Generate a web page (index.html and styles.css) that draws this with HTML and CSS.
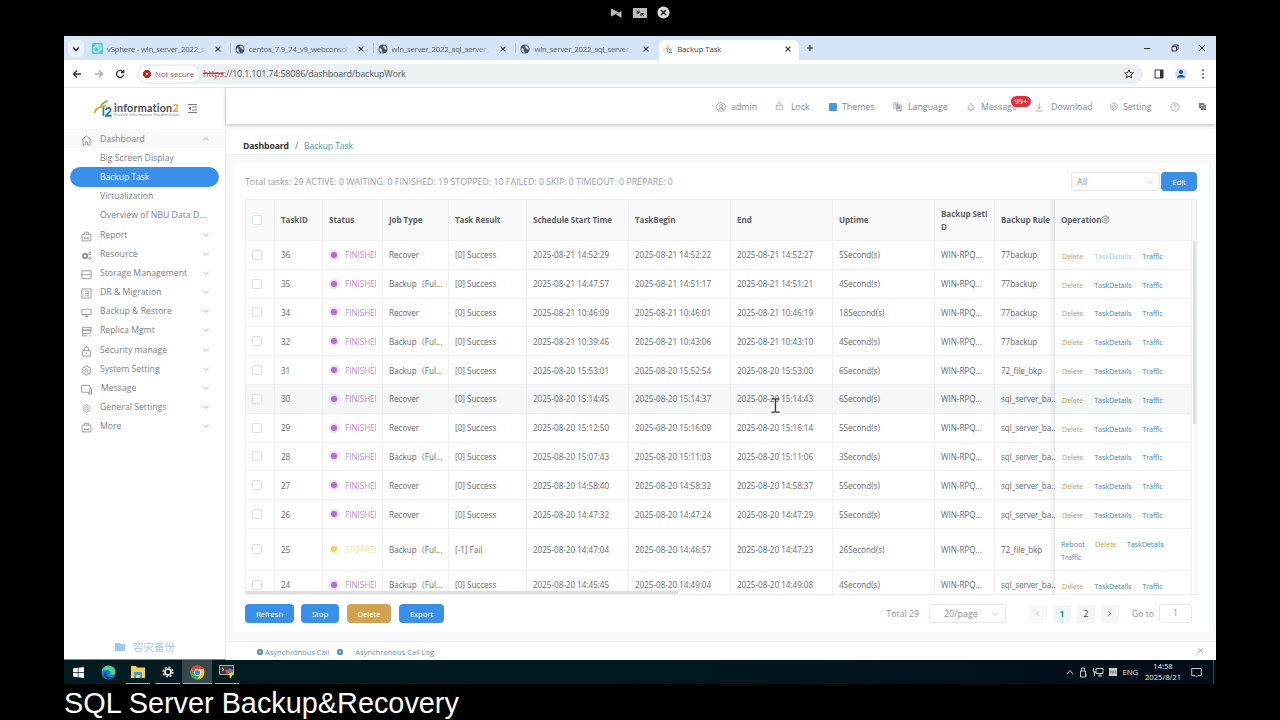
FILE: index.html
```html
<!DOCTYPE html>
<html lang="en">
<head>
    <meta charset="UTF-8">
    <title>Backup Task</title>
    <link rel="stylesheet" href="styles.css">
</head>
<body>
    <!-- shared icons -->
    <svg class="defs" width="0" height="0">
        <symbol id="x" viewBox="0 0 10 10"><path d="M2 2l6 6M8 2l-6 6"/></symbol>
        <symbol id="down" viewBox="0 0 10 10"><path d="M1.5 3.2L5 6.8l3.500-3.600"/></symbol>
        <symbol id="globe" viewBox="0 0 12 12"><circle cx="6" cy="6" r="5.500" fill="#46525e"/><path d="M2 4.500l2.500 1.500v2l1.500 2.500H4.500L1.800 8zM6.500 1.800l-1 2 2 .7.500 1.700 2.400.3-.2-2-1.700-2.300z" fill="#d6e4f8"/></symbol>
        <symbol id="gear" viewBox="0 0 12 12"><path d="M4.700 1.200h2.600l.5 1.500 1.600-.2 1.200 2.100L9.600 6l1 1.400-1.200 2.100-1.600-.2-.5 1.500H4.700l-.5-1.500-1.600.2-1.200-2.100 1-1.400-1-1.400 1.200-2.100 1.600.2z"/><circle cx="6" cy="6" r="1.800"/></symbol>
        <symbol id="lock" viewBox="0 0 12 12"><path d="M1.800 5h8.400v6H1.800zM3.800 5V3a2.200 2.200 0 0 1 4.400 0v2M6 7.300v1.500"/></symbol>
        <symbol id="bag" viewBox="0 0 12 12"><path d="M1.200 3.500h9.600v7.300H1.200zM4 3.300V1.300h4v2M3.500 8h5M4.200 6.800v2.400M7.800 6.800v2.400"/></symbol>
        <symbol id="i2" viewBox="0 0 34 28"><path d="M1 22C3 12 10 14 21 10" fill="none" stroke="#e3a32d" stroke-width="3"/><path d="M12 13C13 4 19 7 23 2" fill="none" stroke="#86b84b" stroke-width="3"/><path d="M16 13v13M20 17c1-4 10-4 8 1-1 3-8 7-8 8h10" fill="none" stroke="#2480b4" stroke-width="3"/></symbol>
    </svg>

    <!-- remote control bar -->
    <div class="remote-bar">
        <svg width="12" height="12" viewBox="0 0 12 12"><path d="M1 1.500l8 4-8 4zM11.500 4v7L6 7.500z" fill="#bbb"/></svg>
        <svg width="14" height="10" viewBox="0 0 14 10"><path d="M0 0h14v10H0z" fill="#bbb"/><path d="M3 2l3 3M6 2.500V5H3.500M11 8L8 5.500M8 8V5.500h2.500" stroke="#111" fill="none"/></svg>
        <svg width="13" height="13" viewBox="0 0 13 13"><circle cx="6.500" cy="6.500" r="6" fill="#ddd"/><path d="M4 4l5 5M9 4L4 9" stroke="#111" stroke-width="1.500"/></svg>
    </div>

    <div class="window">
        <!-- browser tabs -->
        <div class="tabs">
            <div class="tab-search"><svg class="ln" width="8" height="8"><use href="#down"/></svg></div>
            <div class="tab">
                <svg width="11" height="11" viewBox="0 0 11 11"><rect width="11" height="11" rx="1" fill="#53c6d2"/><path d="M2 4h5v5H2zM4 4V2h5v5H7" fill="none" stroke="#dff6f8"/></svg>
                <span class="tab-title">vSphere - win_server_2022_s</span><svg class="ln" width="8" height="8"><use href="#x"/></svg>
            </div>
            <div class="tab">
                <svg width="10" height="10"><use href="#globe"/></svg>
                <span class="tab-title">centos_7.9_74_v9_webconsol</span><svg class="ln" width="8" height="8"><use href="#x"/></svg>
            </div>
            <div class="tab">
                <svg width="10" height="10"><use href="#globe"/></svg>
                <span class="tab-title">win_server_2022_sql_server_</span><svg class="ln" width="8" height="8"><use href="#x"/></svg>
            </div>
            <div class="tab">
                <svg width="10" height="10"><use href="#globe"/></svg>
                <span class="tab-title">win_server_2022_sql_server_</span><svg class="ln" width="8" height="8"><use href="#x"/></svg>
            </div>
            <div class="tab active">
                <svg width="10" height="10"><use href="#i2"/></svg>
                <span class="tab-title">Backup Task</span><svg class="ln" width="8" height="8"><use href="#x"/></svg>
            </div>
            <svg class="new-tab" width="8" height="8" viewBox="0 0 8 8"><path d="M4 1v6M1 4h6"/></svg>
            <div class="win-buttons">
                <svg width="8" height="8" viewBox="0 0 8 8"><path d="M1 4.500h6"/></svg>
                <svg width="8" height="8" viewBox="0 0 8 8"><path d="M1 2.500h4.500V7H1zM2.500 2.500V1H7v4.500H5.500"/></svg>
                <svg width="8" height="8" viewBox="0 0 8 8"><path d="M1 1l6 6M7 1L1 7"/></svg>
            </div>
        </div>

        <!-- address bar -->
        <div class="toolbar">
            <svg class="nav-icon" width="10" height="10" viewBox="0 0 10 10"><path d="M9 5H1.500M5 1.500L1.500 5 5 8.500"/></svg>
            <svg class="nav-icon off" width="10" height="10" viewBox="0 0 10 10"><path d="M1 5h7.500M5 1.500L8.500 5 5 8.500"/></svg>
            <svg class="nav-icon" width="10" height="10" viewBox="0 0 10 10"><path d="M8 2.800A3.600 3.600 0 1 0 8.600 5.600M8.700 1v2.500H6"/></svg>
            <div class="url-bar">
                <div class="not-secure">
                    <svg width="8" height="8" viewBox="0 0 8 8"><path d="M2.400 0h3.200L8 2.400v3.200L5.600 8H2.400L0 5.600V2.400z" fill="#b3261e"/><path d="M2.700 2.700l2.600 2.600M5.300 2.700L2.700 5.300" stroke="#fff"/></svg>
                    <span>Not secure</span>
                </div>
                <span class="url"><s>https</s>://10.1.101.74:58086/dashboard/backupWork</span>
                <svg class="star" width="10" height="10" viewBox="0 0 10 10"><path d="M5 .8l1.200 2.900 3.100.2-2.400 2 .8 3L5 7.300 2.300 8.900l.8-3-2.400-2 3.100-.2z"/></svg>
            </div>
            <svg class="side-panel" width="10" height="10" viewBox="0 0 10 10"><path d="M1 1h8v8H1z" fill="none" stroke="#333"/><path d="M6 1h3v8H6z" fill="#333"/></svg>
            <svg class="profile" width="12" height="12" viewBox="0 0 12 12"><circle cx="6" cy="6" r="6" fill="#d3e3fd"/><circle cx="6" cy="4" r="2" fill="#174ea6"/><path d="M2 9.500C2 6 10 6 10 9.500z" fill="#174ea6"/></svg>
            <svg width="4" height="10" viewBox="0 0 4 10"><path d="M1.200.5h1.600v1.600H1.200zM1.200 4.200h1.600v1.600H1.200zM1.200 7.900h1.600v1.600H1.200z" fill="#333"/></svg>
        </div>

        <div class="app">
            <!-- sidebar -->
            <div class="sidebar">
                <div class="brand">
                    <svg width="20" height="18" viewBox="0 0 34 28" preserveAspectRatio="none"><use href="#i2"/></svg>
                    <div class="brand-text">
                        <div class="brand-name">information<b>2</b></div>
                        <div class="brand-sub">Double Information Double Value</div>
                    </div>
                    <svg class="fold" width="9" height="9" viewBox="0 0 9 9"><path d="M0 .5h9M4 3h5M4 6h5M0 8.500h9"/><path d="M2.800 2.800v3.400L.5 4.500z" fill="#555" stroke="none"/></svg>
                </div>
                <div class="menu">
                    <div class="item open"><svg class="mi" viewBox="0 0 12 12"><path d="M1 5.500L6 1l5 4.500M2.200 5v6h2.600V7.500h2.400V11h2.600V5"/></svg><span>Dashboard</span><svg class="ln arrow up" width="8" height="8"><use href="#down"/></svg></div>
                    <div class="item sub"><span>Big Screen Display</span></div>
                    <div class="item sub selected"><span>Backup Task</span></div>
                    <div class="item sub"><span>Virtualization</span></div>
                    <div class="item sub"><span class="long">Overview of NBU Data D...</span></div>
                    <div class="item"><svg class="mi"><use href="#bag"/></svg><span>Report</span><svg class="ln arrow" width="8" height="8"><use href="#down"/></svg></div>
                    <div class="item"><svg class="mi" viewBox="0 0 12 12"><circle cx="4.500" cy="6.500" r="2.300" stroke-width="2"/><circle cx="9.500" cy="4" r="1.200"/><circle cx="9.500" cy="9" r="1.200"/></svg><span>Resource</span><svg class="ln arrow" width="8" height="8"><use href="#down"/></svg></div>
                    <div class="item"><svg class="mi" viewBox="0 0 12 12"><path d="M1 2h10v8.500H1zM1 6.200h10"/></svg><span>Storage Management</span><svg class="ln arrow" width="8" height="8"><use href="#down"/></svg></div>
                    <div class="item"><svg class="mi" viewBox="0 0 12 12"><path d="M1 1h10v10H1zM4.500 3.500H9M4.500 6H9M4.500 8.500H9M2.800 3.500h.7M2.800 6h.7M2.800 8.500h.7"/></svg><span>DR &amp; Migration</span><svg class="ln arrow" width="8" height="8"><use href="#down"/></svg></div>
                    <div class="item"><svg class="mi" viewBox="0 0 12 12"><path d="M1 2.500h10v5.700H1zM4 10.500h4M6 8v2.500"/></svg><span>Backup &amp; Restore</span><svg class="ln arrow" width="8" height="8"><use href="#down"/></svg></div>
                    <div class="item"><svg class="mi" viewBox="0 0 12 12"><path d="M1.500 1.500h9.500v3H1.500zM1.500 4.500h9.500L10 8H1.500zM1.500 8v2.800H7M8.500 10.800h2"/></svg><span>Replica Mgmt</span><svg class="ln arrow" width="8" height="8"><use href="#down"/></svg></div>
                    <div class="item"><svg class="mi"><use href="#lock"/></svg><span>Security manage</span><svg class="ln arrow" width="8" height="8"><use href="#down"/></svg></div>
                    <div class="item"><svg class="mi"><use href="#gear"/></svg><span>System Setting</span><svg class="ln arrow" width="8" height="8"><use href="#down"/></svg></div>
                    <div class="item message"><svg class="mi" viewBox="0 0 12 12"><path d="M.7 1.500h9V9h-9zM9.700 5H11.500v6H8.500V9"/></svg><span>Message</span><svg class="ln arrow" width="8" height="8"><use href="#down"/></svg></div>
                    <div class="item"><svg class="mi small"><use href="#gear"/></svg><span>General Settings</span><svg class="ln arrow" width="8" height="8"><use href="#down"/></svg></div>
                    <div class="item"><svg class="mi"><use href="#bag"/></svg><span>More</span><svg class="ln arrow" width="8" height="8"><use href="#down"/></svg></div>
                </div>
                <div class="sidebar-foot">
                    <svg width="10" height="10" viewBox="0 0 10 10"><path d="M0 1h5l1 1h4v7H0z" fill="#9cc8ec"/></svg>
                    <span>容灾备份</span>
                </div>
            </div>

            <div class="main">
                <!-- top header -->
                <div class="header">
                    <div class="h-item w-admin"><svg class="hi" viewBox="0 0 12 12"><circle cx="6" cy="6" r="5.300"/><circle cx="6" cy="4.800" r="1.900"/><path d="M2.500 9.800c1-3.200 6-3.200 7 0"/></svg><span>admin</span></div>
                    <div class="h-item w-lock"><svg class="hi" viewBox="0 0 14 14"><use href="#lock" width="12" height="12"/></svg><span>Lock</span></div>
                    <div class="h-item w-themes"><i class="theme-box"></i><span>Themes</span></div>
                    <div class="h-item w-lang"><svg class="hi" viewBox="0 0 13 13"><path d="M1 1h5v7H1zM2 3h3M3.500 2v4" stroke="#888"/><path d="M5 4h5.500v7.500H5zM6.500 9.500l1.300-4 1.300 4" stroke="#555"/></svg><span>Language</span></div>
                    <div class="h-item w-msg"><svg class="hi" viewBox="0 0 13 12"><path d="M1 9.500C2.500 8 2 3 5 2c3 1 2.500 6 4 7.500zM5 .7V2M4 11h2"/></svg><span>Message</span><b class="badge">99+</b></div>
                    <div class="h-item w-down"><svg class="hi" viewBox="0 0 12 12"><path d="M5 1v7M2.500 5.500L5 8l2.500-2.500M1 10.800h8"/></svg><span>Download</span></div>
                    <div class="h-item w-set"><svg class="hi" viewBox="0 0 14 14"><path d="M5.500 1l4.500 2.600v5.200L5.500 11.400 1 8.800V3.600z"/><circle cx="5.500" cy="6.200" r="2.300"/></svg><span>Setting</span></div>
                    <div class="h-item w-help"><svg class="hi" viewBox="0 0 12 12"><circle cx="6" cy="6" r="5"/><path d="M4.500 4.800c0-2 3-2 3 0 0 1-1.500 1-1.500 2.200M6 8.200v.8"/></svg></div>
                    <div class="h-item"><svg width="7" height="7" viewBox="0 0 8 8"><path d="M0 0h6v2h2v6H2V6H0z" fill="#777"/><path d="M2 3h3M5 5h2" stroke="#ddd"/></svg></div>
                </div>
                <div class="crumbs"><b>Dashboard</b><span class="slash">/</span><span class="here">Backup Task</span></div>

                <div class="card">
                    <div class="card-top">
                        <span class="summary">Total tasks: 29 ACTIVE: 0 WAITING: 0 FINISHED: 19 STOPPED: 10 FAILED: 0 SKIP: 0 TIMEOUT: 0 PREPARE: 0</span>
                        <div class="select filter"><span>All</span><svg class="ln" width="8" height="8"><use href="#down"/></svg></div>
                        <button class="btn edit">Edit</button>
                    </div>

                    <div class="table">
                        <div class="row head">
                            <div class="cell check"><i></i></div>
                            <div class="cell">TaskID</div>
                            <div class="cell">Status</div>
                            <div class="cell">Job Type</div>
                            <div class="cell">Task Result</div>
                            <div class="cell">Schedule Start Time</div>
                            <div class="cell">TaskBegin</div>
                            <div class="cell">End</div>
                            <div class="cell">Uptime</div>
                            <div class="cell">Backup SetI<br>D</div>
                            <div class="cell">Backup Rule</div>
                            <div class="cell op">Operation<svg width="9" height="9"><use href="#gear"/></svg></div>
                            <div class="cell gutter"></div>
                        </div>
                        <div class="rows" id="rows"></div>
                        <div class="scroll-y"></div>
                        <div class="scroll-x"></div>
                    </div>

                    <div class="card-bottom">
                        <button class="btn refresh">Refresh</button>
                        <button class="btn stop">Stop</button>
                        <button class="btn delete">Delete</button>
                        <button class="btn export">Export</button>
                        <div class="pager">
                            <span class="total">Total 29</span>
                            <div class="select size"><span>20/page</span><svg class="ln" width="8" height="8"><use href="#down"/></svg></div>
                            <span class="page prev"><svg class="ln" width="7" height="7"><use href="#down"/></svg></span>
                            <span class="page current">1</span>
                            <span class="page">2</span>
                            <span class="page next"><svg class="ln" width="7" height="7"><use href="#down"/></svg></span>
                            <span class="goto">Go to</span>
                            <span class="goto-box">1</span>
                        </div>
                    </div>
                </div>

                <div class="async-bar">
                    <i class="ring"></i><span>Asynchronous Call</span>
                    <i class="ring second"></i><span>Asynchronous Call Log</span>
                    <svg class="ln" width="7" height="7"><use href="#x"/></svg>
                </div>
            </div>
        </div>
    </div>

    <!-- windows taskbar -->
    <div class="taskbar">
        <div class="task"><svg width="11" height="11" viewBox="0 0 11 11"><path d="M0 1.500L4.800.8v4.400H0zM5.500.7L11 0v5.200H5.500zM0 5.900h4.800v4.300L0 9.500zM5.500 5.900H11V11l-5.500-.7z" fill="#fff"/></svg></div>
        <div class="task"><svg width="15" height="15" viewBox="0 0 15 15"><circle cx="7.500" cy="7.500" r="7" fill="#1b7fd0"/><path d="M1 6C2-1 14-1 14.500 7c0 3-4 3.500-5.500 2 1.500-2 0-4-2.500-4S2 5.500 1 6z" fill="#4fd08c"/><path d="M5.500 8c0 4 4 5 7.500 3.500-3 4-10 3-10-2 0-2 2-3.500 4-3.500-1 .500-1.500 1-1.500 2z" fill="#0d4c93"/></svg></div>
        <div class="task running"><svg width="14" height="12" viewBox="0 0 14 12"><path d="M0 0h5l1 1.500h8V12H0z" fill="#f5cf58"/><path d="M3 6h8v6H9V9H5v3H3z" fill="#4c93c9"/></svg></div>
        <div class="task running"><svg width="12" height="12" viewBox="0 0 12 12"><circle cx="6" cy="6" r="3" fill="none" stroke="#fff" stroke-width="1.500"/><circle cx="6" cy="6" r="4.800" fill="none" stroke="#fff" stroke-width="1.500" stroke-dasharray="1.900 1.870"/></svg></div>
        <div class="task running focus"><svg width="15" height="15" viewBox="0 0 15 15"><circle cx="7.500" cy="7.500" r="7" fill="#f6c443"/><path d="M1.400 4A7 7 0 0 1 13.600 4H7.500L4.500 9z" fill="#e04436"/><path d="M1.400 4a7 7 0 0 0 5.600 10.500L10.500 9h-6z" fill="#3ba757"/><circle cx="7.500" cy="7.500" r="3.400" fill="#fff"/><circle cx="7.500" cy="7.500" r="2.600" fill="#4285d8"/></svg></div>
        <div class="task running"><svg width="16" height="14" viewBox="0 0 16 14"><path d="M.5.500h14v9H.5z" fill="#34383c" stroke="#aaa"/><path d="M3 3l2 1.500L3 6" stroke="#fff" fill="none"/><path d="M6 5l4-1 1 3-3 3z" fill="#e0483c"/><path d="M10 3l4 2-1 4-3-2z" fill="#3d84d6"/><path d="M10 8l5-1-2 4-2 3z" fill="#c8e03c"/></svg></div>
        <div class="tray">
            <svg width="8" height="8" viewBox="0 0 8 8"><path d="M1 6l3-3.500L7 6"/></svg>
            <svg width="8" height="11" viewBox="0 0 8 11"><path d="M2.500 4V1h3v3M1.500 4h5v6h-5zM6 8h2"/></svg>
            <svg width="11" height="10" viewBox="0 0 11 10"><path d="M3 1.500h7v5H3zM5 9h4M7 6.500V9M.5 1v4H3M1.500 5v4"/></svg>
            <svg width="8" height="8" viewBox="0 0 9 9"><path d="M0 0h9v9H0z" fill="#ccc" stroke="none"/><path d="M1 3l1 3 1-3 1 3 1-3v3M7 6V3l1 3" stroke="#666" stroke-width=".7"/></svg>
            <span class="lang">ENG</span>
            <div class="clock">14:58<br>2025/8/21</div>
            <svg class="notice" width="11" height="11" viewBox="0 0 11 11"><path d="M.7 1.500h9.600v7H7L5.500 10 4 8.500H.7z"/></svg>
            <i class="peek"></i>
        </div>
    </div>

    <div class="caption">SQL Server Backup&amp;Recovery</div>

    <!-- text cursor over the table -->
    <svg class="cursor" width="9" height="15" viewBox="0 0 9 15"><path d="M.5.800H3.500L4.500 1.500 5.500.800H8.500M4.500 1.500v12M.5 14.200h3l1-.7 1 .7h3" fill="none" stroke="#333" stroke-width="1.300"/></svg>

    <script src="script.js"></script>
</body>
</html>
```

FILE: styles.css
```css
* {
    box-sizing: border-box;
}

body {
    margin: 0;
    width: 1280px;
    height: 720px;
    overflow: hidden;
    background: #000;
    font-family: "Open Sans", "Noto Sans", "Noto Sans CJK SC", sans-serif;
    font-size: 8.6px;
    color: #666a6e;
}

svg {
    flex: none;
    display: block;
}

.defs {
    position: absolute;
}

.ln {
    fill: none;
    stroke: currentColor;
    stroke-width: 1;
}

/* remote control bar */
.remote-bar {
    height: 36px;
    padding: 0 0 11px 610px;
    display: flex;
    align-items: center;
    gap: 10.5px;
}

.window {
    width: 1152px;
    height: 624px;
    margin: 0 64px;
    background: #fff;
}

/* browser tabs */
.tabs {
    height: 24px;
    background: #d6e4f8;
    display: flex;
    align-items: flex-end;
    padding-left: 4px;
}

.tab-search {
    width: 16px;
    height: 17px;
    margin: 0 4px 3px 0;
    border-radius: 5px;
    background: #eaf1fc;
    display: flex;
    align-items: center;
    justify-content: center;
    color: #222;
}

.tab-search .ln {
    stroke-width: 1.8;
}

.tab {
    width: 142.8px;
    height: 20px;
    padding: 0 9px 3px 4px;
    display: flex;
    align-items: center;
    color: #56616d;
    font-size: 7.8px;
    letter-spacing: -0.22px;
    background: linear-gradient(#a9bbd3, #a9bbd3) right 0 top 3px / 1px 10px no-repeat;
}

.tab:nth-child(5),
.tab.active {
    background-image: none;
}

.tab-title {
    flex: none;
    margin-left: 4px;
    margin-right: auto;
    white-space: nowrap;
    -webkit-mask-image: linear-gradient(to right, #000 88%, rgba(0, 0, 0, 0.2));
    mask-image: linear-gradient(to right, #000 88%, rgba(0, 0, 0, 0.2));
}

.tab .ln {
    stroke-width: 1.5;
    color: #333;
}

.tab.active {
    width: 140px;
    padding-right: 7px;
    border-radius: 6px 6px 0 0;
    background: #fff;
    color: #444;
    letter-spacing: -0.1px;
}

.active .tab-title {
    -webkit-mask-image: none;
    mask-image: none;
}

.new-tab {
    margin: 0 0 8px 7px;
    stroke: #333;
    stroke-width: 1.2;
}

.win-buttons {
    display: flex;
    gap: 19.5px;
    margin: 0 10px 8px auto;
    fill: none;
    stroke: #333;
    stroke-width: 1;
}

/* address bar */
.toolbar {
    height: 28px;
    padding-left: 8px;
    border-bottom: 1px solid #e6e9ec;
    display: flex;
    align-items: center;
}

.nav-icon {
    margin-right: 11.7px;
    fill: none;
    stroke: #333;
    stroke-width: 1.3;
}

.nav-icon.off {
    stroke: #aaa;
}

.url-bar {
    width: 1006px;
    height: 20px;
    margin-right: 11px;
    padding: 0 9px 0 2px;
    border-radius: 10px;
    background: #ebf0f3;
    display: flex;
    align-items: center;
}

.not-secure {
    width: 59px;
    height: 16px;
    padding-left: 4px;
    border-radius: 8px;
    background: #fff;
    color: #ab514c;
    font-size: 8px;
    letter-spacing: -0.15px;
    display: flex;
    align-items: center;
    gap: 4px;
    white-space: nowrap;
}

.url {
    margin-left: 5px;
    font-size: 9px;
    letter-spacing: -0.2px;
    color: #53585e;
}

.url s {
    color: #b84843;
}

.star {
    margin-left: auto;
    fill: none;
    stroke: #333;
}

.side-panel {
    margin-right: 11px;
}

.profile {
    margin-right: 14px;
}

/* page */
.app {
    height: 572px;
    display: flex;
}

.sidebar {
    width: 162px;
    border-right: 1px solid #ecedf0;
    border-bottom: 1px solid #3f8fe0;
    display: flex;
    flex-direction: column;
}

.brand {
    height: 41px;
    padding: 0 0 1px 30px;
    display: flex;
    align-items: center;
}

.brand-text {
    width: 66px;
    margin-top: 4px;
}

.brand-name {
    font: bold 10.8px/11px Lato, sans-serif;
    letter-spacing: 0.2px;
    color: #4b4f55;
}

.brand-name b {
    color: #dfa12f;
}

.brand-sub {
    margin-top: -1px;
    font-size: 4.2px;
    line-height: 6px;
    white-space: nowrap;
    color: #777;
}

.fold {
    margin: 1px 0 0 8px;
    fill: none;
    stroke: #555;
    stroke-width: 0.8;
}

.item {
    height: 19.2px;
    padding: 0 15px 0 17px;
    display: flex;
    align-items: center;
    font-size: 8.7px;
    color: #7a8086;
    white-space: nowrap;
}

.item.open {
    background: #f8f9fb;
}

.mi {
    width: 11px;
    height: 11px;
    margin: 3px 8px 0 0;
    fill: none;
    stroke: #858a90;
    stroke-width: 0.9;
}

.mi.small {
    width: 9px;
    height: 9px;
    margin: 3px 9px 0 1px;
}

.message span {
    margin-left: 1px;
}

.arrow {
    margin-left: auto;
    color: #999;
    stroke-width: 0.9;
}

.arrow.up {
    transform: rotate(180deg);
}

.item.sub {
    padding-left: 36px;
}

.long {
    letter-spacing: 0.03px;
}

.item.selected {
    margin: 0 6px;
    padding-left: 30px;
    border-radius: 10px;
    background: #3a8fe9;
    color: #fff;
    letter-spacing: -0.1px;
}

.sidebar-foot {
    margin-top: auto;
    height: 25px;
    padding-left: 51px;
    display: flex;
    align-items: center;
    gap: 8px;
    font-size: 10.5px;
    color: #a9c8e4;
}

.main {
    flex: 1;
    display: flex;
    flex-direction: column;
    background: #f6f8fa;
}

/* top header */
.header {
    position: relative;
    height: 36px;
    padding: 1px 0 0 490px;
    background: #fff;
    box-shadow: 0 1px 4px rgba(0, 21, 41, 0.25);
    display: flex;
    align-items: center;
    font-size: 8.8px;
    color: #85898e;
}

.h-item {
    position: relative;
    display: flex;
    align-items: center;
}

.hi {
    width: 10px;
    height: 10px;
    fill: none;
    stroke: #888;
    stroke-width: 0.8;
}

.w-admin { width: 59px; gap: 5px; }
.w-lock { width: 54px; gap: 6px; }
.w-themes { width: 64px; gap: 5px; }
.w-lang { width: 74px; gap: 5px; }
.w-msg { width: 68px; gap: 4px; }
.w-down { width: 75px; gap: 6px; }
.w-set { width: 60px; gap: 3px; }
.w-help { width: 29px; }

.theme-box {
    width: 8px;
    height: 8px;
    border-radius: 1px;
    background: #449be8;
}

.badge {
    position: absolute;
    left: 44px;
    top: -5px;
    width: 20px;
    height: 11px;
    border-radius: 6px;
    background: #d6333f;
    color: #fff;
    font-size: 7.5px;
    font-weight: normal;
    line-height: 11px;
    text-align: center;
}

.crumbs {
    height: 31px;
    padding: 13px 0 0 17px;
    background: linear-gradient(#f7f8f9, #fff 9px);
    border-bottom: 1px solid #f0f1f3;
    display: flex;
    align-items: center;
    font-size: 8.6px;
}

.crumbs b {
    color: #303133;
    letter-spacing: -0.1px;
}

.slash {
    margin: 0 6px 0 6px;
}

.here {
    color: #45a0ae;
    letter-spacing: -0.08px;
}

/* card */
.card {
    height: 469px;
    margin: 8px 7px 0 8px;
    padding: 8px 12px 0 11px;
    border-radius: 3px;
    background: #fff;
}

.card-top {
    height: 28px;
    padding-bottom: 7px;
    display: flex;
    align-items: center;
}

.summary {
    margin-right: auto;
    font-size: 8.75px;
    letter-spacing: 0.03px;
    color: #979ca1;
    white-space: nowrap;
}

.select {
    height: 19px;
    padding: 0 6px;
    border: 1px solid #e4e7ea;
    border-radius: 3px;
    display: flex;
    align-items: center;
    color: #8d9298;
    font-size: 9px;
}

.select .ln {
    margin-left: auto;
    color: #b8bcc2;
}

.filter {
    width: 89px;
    padding: 0 5px;
}

.btn {
    height: 19px;
    padding: 0;
    border: none;
    border-radius: 4px;
    background: #3a8fe9;
    color: #fff;
    font-family: inherit;
    font-size: 7.8px;
    letter-spacing: -0.1px;
}

.edit {
    width: 36px;
    margin-left: 1px;
}

/* task table */
.table {
    position: relative;
    width: 952px;
    height: 396px;
    border: 1px solid #eceef0;
    overflow: hidden;
}

.row {
    display: grid;
    grid-template-columns: 29px 48px 60px 66px 78px 102px 102px 102px 102px 60px 60px 137px 4px;
    height: 28.8px;
}

.cell {
    padding-left: 6px;
    border-right: 1px solid #eef0f2;
    border-bottom: 1px solid #eef0f2;
    display: flex;
    align-items: center;
    white-space: nowrap;
    font-size: 8.15px;
    letter-spacing: -0.03px;
}

.rows {
    height: 353px;
    overflow: hidden;
}

.head {
    height: 41px;
    font-weight: bold;
    color: #5d6065;
}

.head .cell {
    padding-bottom: 1px;
    background: #f8fafa;
    font-size: 8px;
    line-height: 13px;
}

.head .gutter {
    border-right: none;
}

.row.hover .cell {
    background: #f3f7f8;
}

.row.tall {
    height: 42px;
}

.check i {
    width: 10px;
    height: 10px;
    border: 1px solid #dcdfe3;
    border-radius: 2px;
    background: #fff;
}

.status {
    color: #c08bd0;
}

.status i {
    flex: none;
    width: 6px;
    height: 6px;
    margin: 0 8px 0 2px;
    border-radius: 50%;
    background: #b06fc8;
    box-shadow: 0 0 2px 2px #ecd3f5;
}

.status span {
    width: 31px;
    overflow: hidden;
}

.status.stopped {
    color: #f0e5a4;
}

.status.stopped i {
    background: #f0d068;
    box-shadow: 0 0 2px 2px #fdf3cf;
}

.rule {
    border-right: none;
    letter-spacing: -0.08px;
}

.op {
    position: relative;
    background: #fff;
}

.op::before {
    content: "";
    position: absolute;
    left: -6px;
    top: 0;
    bottom: -1px;
    width: 6px;
    background: linear-gradient(to left, rgba(0, 0, 0, 0.09), transparent);
}

.head svg {
    fill: none;
    stroke: #777;
}

.links {
    display: flex;
    flex-wrap: wrap;
    padding-top: 3px;
    font-size: 7.3px;
    line-height: 13px;
    letter-spacing: -0.14px;
    color: #4687b8;
}

.links span {
    margin: 0 10px 0 1px;
}

.tall .links {
    padding-top: 4px;
}

.tall .links span {
    margin-left: 0;
    margin-right: 10.5px;
}

.links .del {
    color: #c5a05a;
}

.links .faded {
    color: #a3cbe0;
}

/* scrollbars lie over the rows */
.scroll-y {
    position: absolute;
    right: 0;
    top: 41px;
    width: 3px;
    height: 183px;
    background: #dfe1e3;
}

.scroll-x {
    position: absolute;
    left: 0;
    bottom: 0;
    width: 432px;
    height: 3px;
    background: #dcdee0;
}

/* buttons and paging */
.card-bottom {
    padding-top: 9px;
    display: flex;
    align-items: center;
}

.refresh { width: 49px; margin-right: 7px; }
.stop { width: 38px; margin-right: 8px; }
.delete { width: 44px; margin-right: 8px; background: #d2a250; }
.export { width: 45px; }

.pager {
    margin-left: auto;
    padding-right: 5px;
    display: flex;
    align-items: center;
    color: #8d9298;
    font-size: 8.7px;
}

.size {
    width: 77px;
    margin: 0 23px 0 10px;
    padding-left: 14px;
}

.page {
    width: 18px;
    height: 18px;
    margin-right: 6px;
    border-radius: 2px;
    background: #f1f5f5;
    color: #444;
    display: flex;
    align-items: center;
    justify-content: center;
}

.page.current {
    background: #eef6fd;
    color: #2f7fd6;
    font-weight: bold;
}

.prev {
    color: #bbb;
    background: #f6f9f9;
}

.prev .ln {
    transform: rotate(90deg);
}

.next .ln {
    transform: rotate(-90deg);
}

.goto {
    margin: 0 5px 0 7px;
}

.goto-box {
    width: 33px;
    height: 19px;
    border: 1px solid #e4e7ea;
    border-radius: 3px;
    text-align: center;
    line-height: 17px;
}

.async-bar {
    height: 19px;
    margin-top: auto;
    padding: 2px 12px 0 31px;
    border-top: 1px solid #eceef0;
    background: #fff;
    display: flex;
    align-items: center;
    font-size: 7.6px;
    letter-spacing: -0.05px;
    color: #6495b5;
}

.ring {
    width: 6px;
    height: 6px;
    margin-right: 2px;
    border: 2px solid #3d8cc4;
    border-radius: 50%;
}

.ring.second {
    margin: 0 12px 0 8px;
}

.async-bar .ln {
    margin: -4px 0 0 auto;
    color: #888;
}

/* windows taskbar */
.taskbar {
    width: 1152px;
    height: 24px;
    margin: 0 64px;
    background: linear-gradient(to right, #021b20, #01171e 60%, #010d18);
    display: flex;
}

.task {
    width: 29.6px;
    display: flex;
    align-items: center;
    justify-content: center;
}

.running {
    background: linear-gradient(#8db8d8, #8db8d8) bottom / 24px 1.5px no-repeat;
}

.running.focus {
    background: linear-gradient(#8db8d8, #8db8d8) bottom / 29px 1.5px no-repeat, #35494c;
}

.tray {
    margin-left: auto;
    display: flex;
    align-items: center;
    gap: 5.5px;
    fill: none;
    stroke: #ddd;
    stroke-width: 0.9;
    color: #e8e8e8;
    font-size: 7.8px;
}

.tray .lang {
    width: 17px;
    letter-spacing: -0.1px;
}

.clock {
    width: 36px;
    font-size: 7.6px;
    line-height: 11px;
    text-align: center;
    white-space: nowrap;
}

.notice {
    margin-left: 4px;
}

.peek {
    width: 1px;
    height: 24px;
    margin: 0 2px 0 6px;
    background: #33434b;
}

.caption {
    padding-left: 64px;
    font: 28.85px/38px "Liberation Sans", Arial, sans-serif;
    color: #fff;
    white-space: nowrap;
}

.cursor {
    position: absolute;
    left: 771px;
    top: 398px;
}
```

FILE: script.js
```javascript
// id, type, result, scheduled, begin, end, seconds, rule
const tasks = [
    [36, "Recover", "[0] Success", "2025-08-21 14:52:29", "2025-08-21 14:52:22", "2025-08-21 14:52:27", 5, "77backup"],
    [35, "Backup（Ful...", "[0] Success", "2025-08-21 14:47:57", "2025-08-21 14:51:17", "2025-08-21 14:51:21", 4, "77backup"],
    [34, "Recover", "[0] Success", "2025-08-21 10:46:09", "2025-08-21 10:46:01", "2025-08-21 10:46:19", 18, "77backup"],
    [32, "Backup（Ful...", "[0] Success", "2025-08-21 10:39:46", "2025-08-21 10:43:06", "2025-08-21 10:43:10", 4, "77backup"],
    [31, "Backup（Ful...", "[0] Success", "2025-08-20 15:53:01", "2025-08-20 15:52:54", "2025-08-20 15:53:00", 6, "72_file_bkp"],
    [30, "Recover", "[0] Success", "2025-08-20 15:14:45", "2025-08-20 15:14:37", "2025-08-20 15:14:43", 6, "sql_server_ba..."],
    [29, "Recover", "[0] Success", "2025-08-20 15:12:50", "2025-08-20 15:16:09", "2025-08-20 15:16:14", 5, "sql_server_ba..."],
    [28, "Backup（Ful...", "[0] Success", "2025-08-20 15:07:43", "2025-08-20 15:11:03", "2025-08-20 15:11:06", 3, "sql_server_ba..."],
    [27, "Recover", "[0] Success", "2025-08-20 14:58:40", "2025-08-20 14:58:32", "2025-08-20 14:58:37", 5, "sql_server_ba..."],
    [26, "Recover", "[0] Success", "2025-08-20 14:47:32", "2025-08-20 14:47:24", "2025-08-20 14:47:29", 5, "sql_server_ba..."],
    [25, "Backup（Ful...", "[-1] Fail", "2025-08-20 14:47:04", "2025-08-20 14:46:57", "2025-08-20 14:47:23", 26, "72_file_bkp"],
    [24, "Backup（Ful...", "[0] Success", "2025-08-20 14:45:45", "2025-08-20 14:49:04", "2025-08-20 14:49:08", 4, "sql_server_ba..."]
];

const rows = document.getElementById("rows");

tasks.forEach(([id, type, result, scheduled, begin, end, seconds, rule]) => {
    const stopped = id === 25;
    const row = document.createElement("div");
    row.className = "row";
    if (stopped) row.classList.add("tall");
    if (id === 30) row.classList.add("hover");

    row.innerHTML = `
        <div class="cell check"><i></i></div>
        <div class="cell">${id}</div>
        <div class="cell status ${stopped ? "stopped" : ""}"><i></i><span>${stopped ? "STOPPED" : "FINISHED"}</span></div>
        <div class="cell">${type}</div>
        <div class="cell">${result}</div>
        <div class="cell">${scheduled}</div>
        <div class="cell">${begin}</div>
        <div class="cell">${end}</div>
        <div class="cell">${seconds}Second(s)</div>
        <div class="cell">WIN-RPQ...</div>
        <div class="cell rule">${rule}</div>
        <div class="cell op"><div class="links">
            ${stopped ? "<span>Reboot</span>" : ""}
            <span class="del">Delete</span>
            <span class="${id === 36 ? "faded" : ""}">TaskDetails</span>
            <span>Traffic</span>
        </div></div>`;
    rows.appendChild(row);
});
```
